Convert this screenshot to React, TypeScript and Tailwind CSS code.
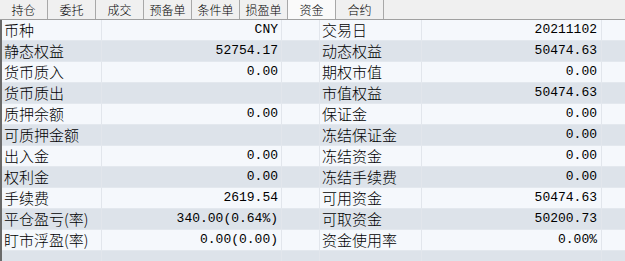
import React from "react";

const tabs = ["持仓", "委托", "成交", "预备单", "条件单", "损盈单", "资金", "合约"];

const rows: [string, string, string, string][] = [
  ["币种", "CNY", "交易日", "20211102"],
  ["静态权益", "52754.17", "动态权益", "50474.63"],
  ["货币质入", "0.00", "期权市值", "0.00"],
  ["货币质出", "", "市值权益", "50474.63"],
  ["质押余额", "0.00", "保证金", "0.00"],
  ["可质押金额", "", "冻结保证金", "0.00"],
  ["出入金", "0.00", "冻结资金", "0.00"],
  ["权利金", "0.00", "冻结手续费", "0.00"],
  ["手续费", "2619.54", "可用资金", "50474.63"],
  ["平仓盈亏(率)", "340.00(0.64%)", "可取资金", "50200.73"],
  ["盯市浮盈(率)", "0.00(0.00)", "资金使用率", "0.00%"],
  ["", "", "", ""],
];

const cjk = { fontFamily: '"Noto Sans CJK SC", "Noto Sans", sans-serif' };
const mono = { fontFamily: '"Liberation Mono", monospace' };

export default function App() {
  return (
    <div className="w-[625px] h-[261px] overflow-hidden bg-[#f5f8fc] text-black">
      <div className="flex h-[19px] bg-[#f0f0f0]">
        {tabs.map((t, i) => (
          <div
            key={t}
            className={`w-[48px] h-[19px] flex items-center justify-center text-[12px] leading-none font-light border-r border-[#a8a8a8] ${
              i === 6 ? "bg-[#fafafa]" : ""
            }`}
            style={cjk}
          >
            {t}
          </div>
        ))}
      </div>
      <div className="h-[1px] bg-[#a0a0a0]" />
      <div className="border-l-2 border-[#6a6a6a]">
        {rows.map((r, i) => (
          <div
            key={i}
            className={`grid grid-cols-[100px_180px_38px_102px_180px_1fr] h-[21px] border-b border-[#e3e8ee] ${
              i % 2 === 1 ? "bg-[#dde3ea]" : "bg-[#f5f8fc]"
            }`}
          >
            <div className="border-r border-[#e2e6ec] pl-[2px] text-[15px] leading-[19px] font-light whitespace-nowrap" style={cjk}>
              {r[0]}
            </div>
            <div className="border-r border-[#e2e6ec] pr-[3px] text-right text-[13px] leading-[20px] whitespace-nowrap" style={mono}>
              {r[1]}
            </div>
            <div className="border-r border-[#e2e6ec]" />
            <div className="border-r border-[#e2e6ec] pl-[2px] text-[15px] leading-[19px] font-light whitespace-nowrap" style={cjk}>
              {r[2]}
            </div>
            <div className="border-r border-[#e2e6ec] pr-[4px] text-right text-[13px] leading-[20px] whitespace-nowrap" style={mono}>
              {r[3]}
            </div>
            <div />
          </div>
        ))}
      </div>
    </div>
  );
}
